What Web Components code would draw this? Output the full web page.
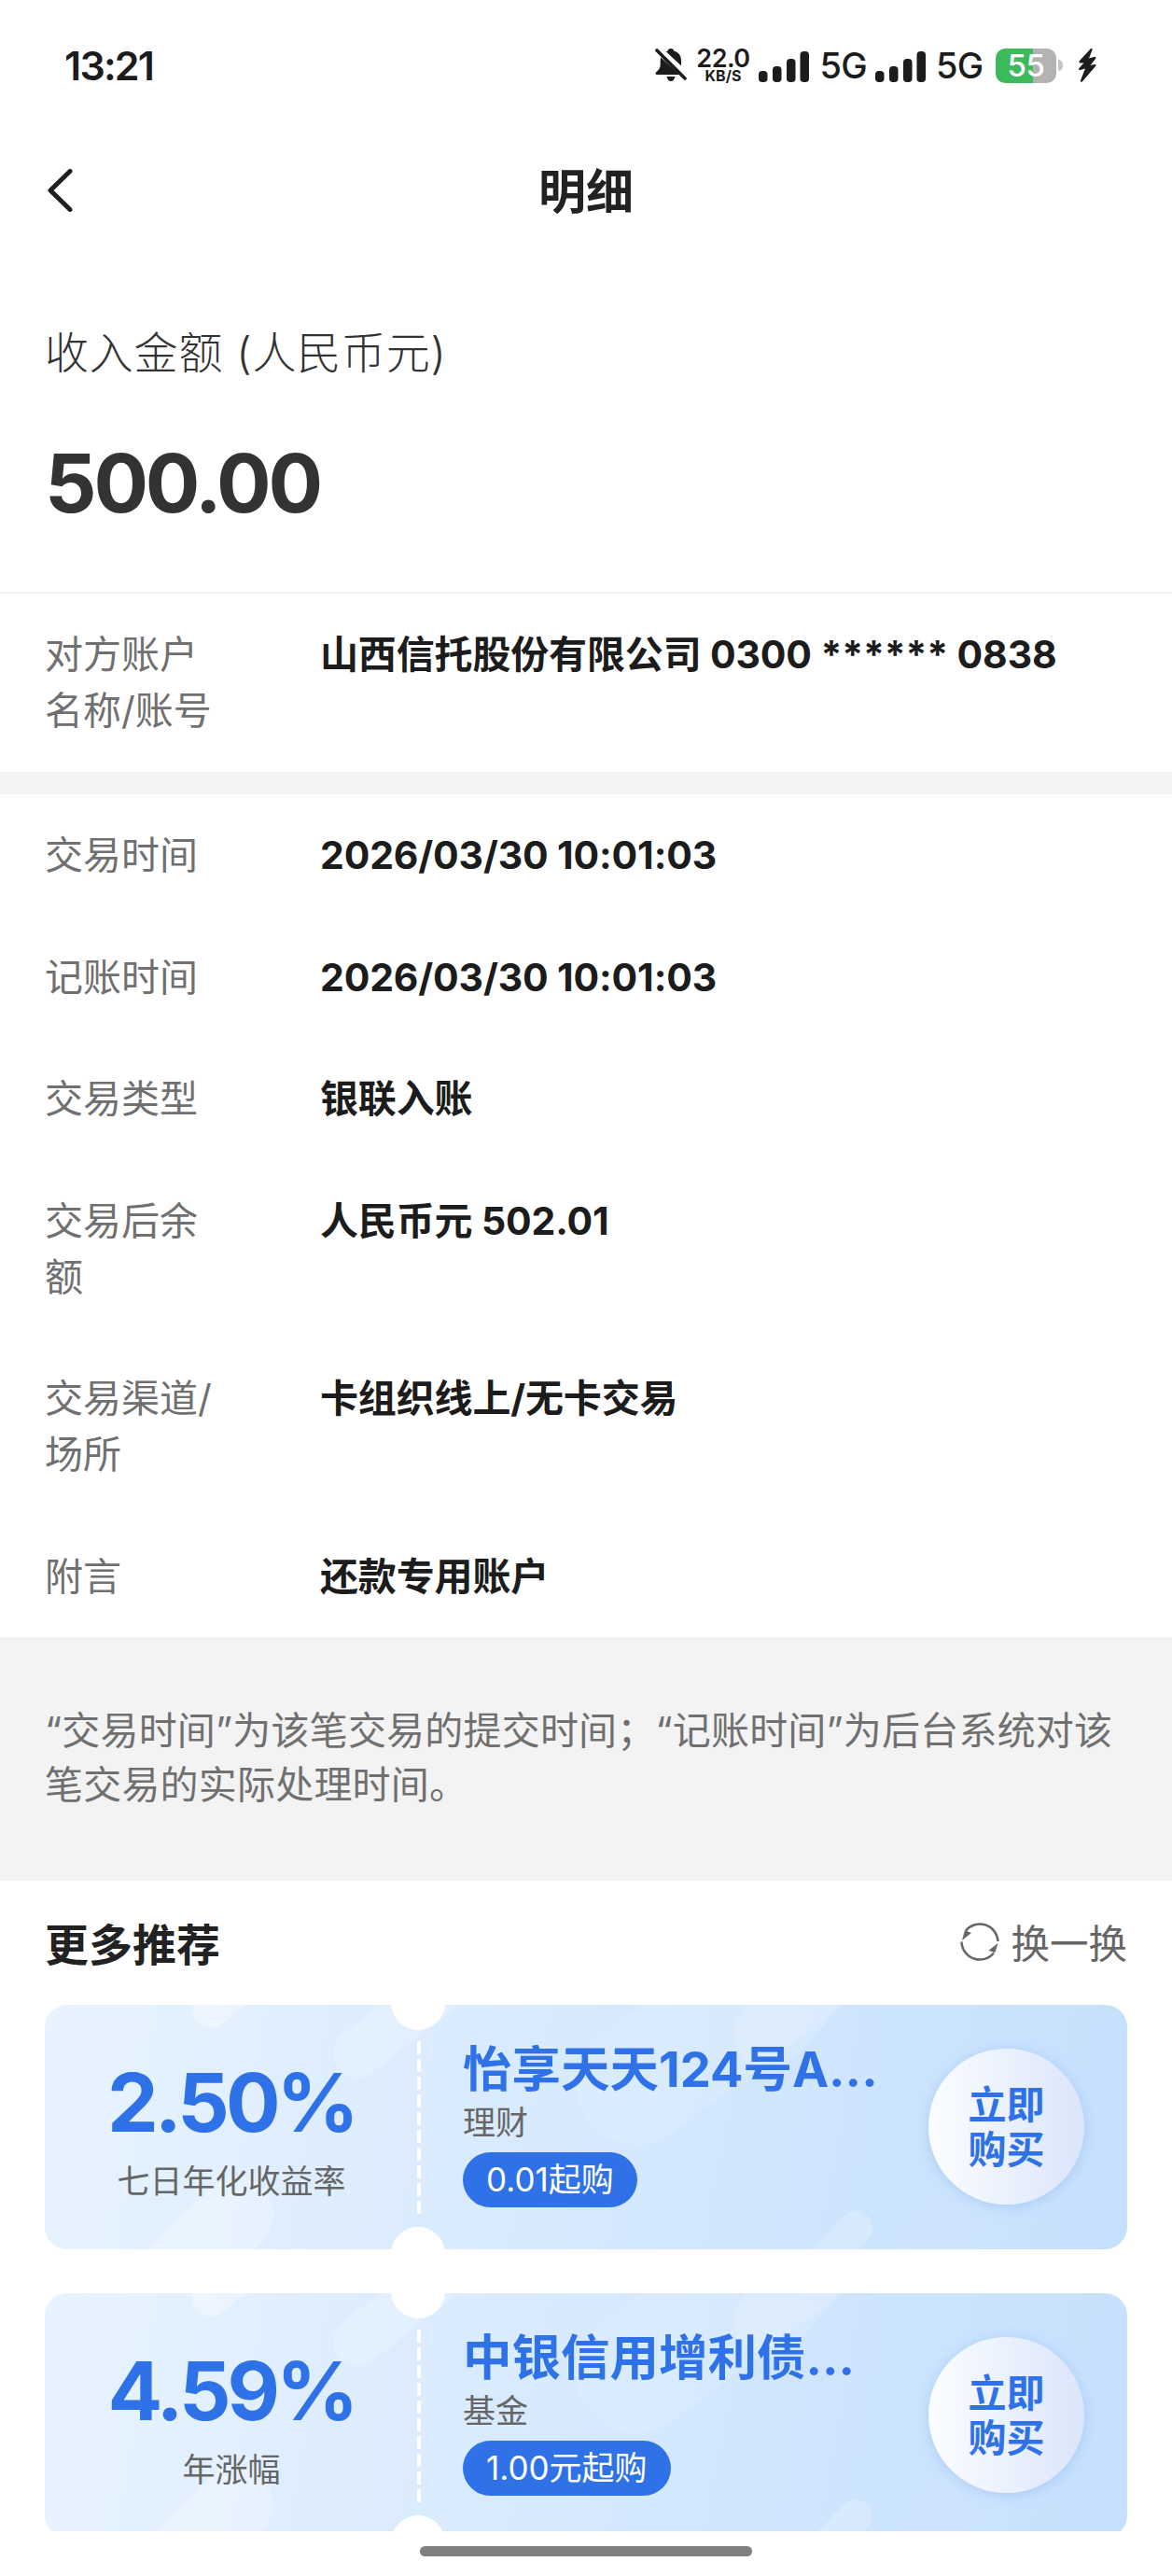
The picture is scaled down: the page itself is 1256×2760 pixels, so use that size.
<!DOCTYPE html>
<html lang="zh-CN">
<head>
<meta charset="utf-8">
<title>明细</title>
<style>
  html, body { margin: 0; padding: 0; background: #fff; }
  body { font-family: Inter, "Noto Sans CJK SC", sans-serif; }
</style>
</head>
<body>
<detail-page>
  <status-bar></status-bar>
  <nav-header title="明细"></nav-header>
  <amount-head label="收入金额 (人民币元)" amount="500.00"></amount-head>
  <detail-row label="对方账户名称/账号" value="山西信托股份有限公司 0300 ****** 0838"></detail-row>
  <grey-gap></grey-gap>
  <detail-row label="交易时间" value="2026/03/30 10:01:03"></detail-row>
  <detail-row label="记账时间" value="2026/03/30 10:01:03"></detail-row>
  <detail-row label="交易类型" value="银联入账"></detail-row>
  <detail-row label="交易后余额" value="人民币元 502.01"></detail-row>
  <detail-row label="交易渠道/场所" value="卡组织线上/无卡交易"></detail-row>
  <detail-row label="附言" value="还款专用账户"></detail-row>
  <info-note>“交易时间”为该笔交易的提交时间；“记账时间”为后台系统对该笔交易的实际处理时间。</info-note>
  <more-head></more-head>
  <product-card rate="2.50%" rate-label="七日年化收益率" name="怡享天天124号A..." kind="理财" start="0.01起购"></product-card>
  <product-card rate="4.59%" rate-label="年涨幅" name="中银信用增利债..." kind="基金" start="1.00元起购"></product-card>
  <home-bar slot="overlay"></home-bar>
</detail-page>

<script>
const FONT = 'Inter, "Noto Sans CJK SC", sans-serif';

// small helper, every element here is only a shadow root with static markup
class Base extends HTMLElement {
  render(html) {
    if (!this.shadowRoot) this.attachShadow({ mode: 'open' });
    this.shadowRoot.innerHTML = html;
  }
}

class DetailPage extends Base {
  connectedCallback() {
    this.render(`
      <style>
        :host { display: block; position: relative; width: 1256px; height: 2760px; overflow: hidden; background: #fff; font-family: ${FONT}; }
      </style>
      <slot></slot>
      <slot name="overlay"></slot>`);
  }
}

class StatusBar extends Base {
  signal() {
    return `<svg width="54" height="33" viewBox="0 0 54 33" fill="#1c1c1c">
      <rect x="0" y="21" width="9.500" height="12" rx="4"/>
      <rect x="15" y="16" width="9.500" height="17" rx="4"/>
      <rect x="30" y="8" width="9.500" height="25" rx="4"/>
      <rect x="44.500" y="0" width="9.500" height="33" rx="4"/>
    </svg>`;
  }
  connectedCallback() {
    this.render(`
      <style>
        :host { display: flex; align-items: center; height: 140px; padding: 0 81px 0 69px; box-sizing: border-box; color: #1c1c1c; }
        .time { font-size: 43px; font-weight: 600; letter-spacing: -1.8px; flex: 1; line-height: 1; margin-top: 1px; }
        .icons { display: flex; align-items: center; height: 40px; }
        .speed { display: flex; flex-direction: column; align-items: center; width: 56px; margin: 0 9.5px 0 11px; font-weight: 600; }
        .speed b { font-size: 27px; line-height: 22px; font-weight: 600; letter-spacing: -.5px; }
        .speed i { font-size: 16px; line-height: 15px; font-style: normal; font-weight: 700; }
        .g { width: 47px; font-size: 38px; font-weight: 500; letter-spacing: -.8px; line-height: 1; white-space: nowrap; }
        .g.a { margin: 0 12.5px 0 12px; }
        .g.b { margin: 0 11px 0 11px; }
        .sig { margin-top: 6px; }
        .batt { position: relative; width: 65px; height: 37px; border-radius: 10px; margin-left: 6px; background: linear-gradient(90deg, #3dbb5c 0 40px, #b3b3b3 40px); color: #fff; text-align: center; font-size: 33px; font-weight: 500; line-height: 37px; letter-spacing: -.5px; }
        .nub { width: 5px; height: 12px; margin-left: 2px; background: #c4c4c4; border-radius: 0 6px 6px 0; }
        .bolt { margin-left: 16px; }
      </style>
      <div class="time">13:21</div>
      <div class="icons">
        <svg width="34" height="38" viewBox="0 0 34 38" fill="#1c1c1c">
          <path d="M17 1c2 0 3 1 3.400 2.800 4.800 1.200 7.600 5 7.600 10.200v5.500L10 4.800c.9-.5 2-.9 3.400-1.100C13.900 2 15 1 17 1z"/>
          <path d="M6.200 10.500 26.500 29H2c-1.500 0-2-1.700-.8-2.700 2.800-2.300 4.500-4.300 4.500-8.300v-4c0-1.300.2-2.400.5-3.500z"/>
          <path d="M12.500 31h9c-.6 3-2.300 5-4.500 5s-3.900-2-4.500-5z"/>
          <path d="M2 3l30 30" stroke="#1c1c1c" stroke-width="3.600" stroke-linecap="round"/>
          <path d="M5.500 0 34 27" stroke="#fff" stroke-width="2.500"/>
        </svg>
        <div class="speed"><b>22.0</b><i>KB/S</i></div>
        <span class="sig">${this.signal()}</span>
        <span class="g a">5G</span>
        <span class="sig">${this.signal()}</span>
        <span class="g b">5G</span>
        <div class="batt">55</div>
        <div class="nub"></div>
        <svg class="bolt" width="20" height="36" viewBox="0 0 20 36" fill="#1c1c1c">
          <path d="M14 0 2 13c-1 1.200-.5 2.500 1 2.500h3.500L1.500 21c-1 1.300-.3 2.500 1.200 2L8 21.500 3 34c-.4 1.500 1 2.500 2 1.300L19 19c1-1.200.5-2.300-1-2l-4.500 1 5.500-7c1-1.300.3-2.400-1.200-2L12 10.500 15.500 1.500C16-.2 15-.8 14 0z"/>
        </svg>
      </div>`);
  }
}

class NavHeader extends Base {
  connectedCallback() {
    this.render(`
      <style>
        :host { display: flex; align-items: center; justify-content: center; position: relative; height: 130px; }
        svg { position: absolute; left: 50px; top: 41px; }
        h1 { margin: 0; font-size: 51px; font-weight: 700; color: #222; line-height: 1; }
      </style>
      <svg width="28" height="46" viewBox="0 0 28 46" fill="none" stroke="#1f1f1f" stroke-width="5" stroke-linecap="round" stroke-linejoin="round">
        <path d="M25 2.500 4 23l21 20.500"/>
      </svg>
      <h1>${this.getAttribute('title')}</h1>`);
    this.removeAttribute('title');
  }
}

class AmountHead extends Base {
  connectedCallback() {
    this.render(`
      <style>
        :host { display: block; padding: 79px 48px 66px; border-bottom: 2px solid #f2f2f2; color: #333; }
        .label { font-size: 47px; line-height: 58px; font-weight: 300; letter-spacing: .8px; }
        .amount { font-size: 87px; line-height: 100px; margin-top: 61px; font-weight: 700; letter-spacing: -3.2px; }
      </style>
      <div class="label">${this.getAttribute('label')}</div>
      <div class="amount">${this.getAttribute('amount')}</div>`);
  }
}

class DetailRow extends Base {
  connectedCallback() {
    this.render(`
      <style>
        :host { display: grid; grid-template-columns: 190px 1fr; column-gap: 105px; padding: 35px 48px 35.5px; font-size: 41px; line-height: 60px; }
        .label { color: #707070; font-weight: 400; }
        .value { color: #1c1c1c; font-weight: 700; letter-spacing: -.15px; }
      </style>
      <div class="label">${this.getAttribute('label')}</div>
      <div class="value">${this.getAttribute('value')}</div>`);
  }
}

class GreyGap extends Base {
  connectedCallback() {
    this.render(`<style>:host { display: block; height: 24.5px; background: #f3f3f3; }</style>`);
  }
}

class InfoNote extends Base {
  connectedCallback() {
    this.render(`
      <style>
        :host { display: block; background: #f3f3f3; padding: 71px 48px 74px; font-size: 41px; line-height: 58px; color: #707070; font-weight: 400; letter-spacing: .2px; }
      </style>
      <slot></slot>`);
  }
}

class MoreHead extends Base {
  connectedCallback() {
    this.render(`
      <style>
        :host { display: flex; align-items: center; justify-content: space-between; height: 66px; padding: 32px 48px 35px; }
        h2 { margin: 0; font-size: 47px; font-weight: 700; color: #222; }
        .swap { display: flex; align-items: center; gap: 12px; font-size: 41.5px; color: #666; font-weight: 400; }
      </style>
      <h2>更多推荐</h2>
      <div class="swap">
        <svg width="42" height="41" viewBox="0 0 42 41" fill="none" stroke="#666" stroke-width="2.500">
          <path d="M6 8.500A19.500 19.500 0 0 1 40.500 20"/>
          <path d="M36 32.500A19.500 19.500 0 0 1 1.500 20.500"/>
          <path d="M2 19 12 11 5 8z" fill="#666" stroke="none"/>
          <path d="M40.500 22 30.500 29.700 37.300 32.300z" fill="#666" stroke="none"/>
        </svg>
        <span>换一换</span>
      </div>`);
  }
}

class ProductCard extends Base {
  connectedCallback() {
    this.render(`
      <style>
        :host { display: block; position: relative; height: 262px; margin: 0 48px 47px; border-radius: 24px; overflow: hidden; background: linear-gradient(100deg, #e8f3ff 0%, #d8eafe 45%, #c5e0fd 100%); }
        .deco { position: absolute; inset: 0; }
        .notch { position: absolute; left: 371px; width: 58px; height: 58px; border-radius: 50%; background: #fff; }
        .notch.top { top: -31px; }
        .notch.bottom { top: 238px; }
        .dash { position: absolute; left: 399px; top: 39px; width: 4px; height: 188px; background: repeating-linear-gradient(180deg, #fff 0 14px, transparent 14px 19px); }
        .row { position: relative; display: flex; height: 100%; }
        .left { width: 400px; display: flex; flex-direction: column; align-items: center; padding-top: 60px; box-sizing: border-box; }
        .rate { font-size: 87px; line-height: 90px; font-weight: 700; color: #2f72e8; letter-spacing: -4px; }
        .rate-label { font-size: 35px; line-height: 46px; color: #666; margin-top: 16px; font-weight: 400; }
        .right { flex: 1; padding: 37px 0 0 48px; min-width: 0; }
        .name { font-size: 52.500px; line-height: 64px; font-weight: 700; color: #2f72e8; white-space: nowrap; }
        .kind { font-size: 35px; line-height: 46px; color: #666; margin-top: 2px; font-weight: 400; }
        .pill { display: inline-block; margin-top: 9px; height: 59px; line-height: 59px; padding: 0 25px; border-radius: 30px; background: #2f72e8; color: #fff; font-size: 35px; font-weight: 400; }
        .buy { position: absolute; right: 46px; top: 47px; width: 167px; height: 167px; border-radius: 50%; background: linear-gradient(90deg, #fbfdff, #dbe5fb); box-shadow: 0 2px 14px rgba(110, 160, 235, .35); color: #2f72e8; font-size: 41px; font-weight: 700; line-height: 48px; display: flex; align-items: center; justify-content: center; text-align: center; }
      </style>
      <svg class="deco" width="1160" height="262" viewBox="0 0 1160 262" fill="none" stroke="#fff" stroke-linecap="round">
        <path d="M178 5 230-40" stroke-width="40" opacity=".35"/>
        <path d="M335 52 440-30" stroke-width="52" opacity=".18"/>
        <path d="M205 225 90 340" stroke-width="80" opacity=".25"/>
        <path d="M634 85 800-40" stroke-width="130" opacity=".13"/>
        <path d="M777 30 830-30" stroke-width="76" opacity=".15"/>
        <path d="M869 239 820 290" stroke-width="36" opacity=".2"/>
        <path d="M985 240 930 320" stroke-width="100" opacity=".06"/>
      </svg>
      <div class="notch top"></div>
      <div class="notch bottom"></div>
      <div class="dash"></div>
      <div class="row">
        <div class="left">
          <div class="rate">${this.getAttribute('rate')}</div>
          <div class="rate-label">${this.getAttribute('rate-label')}</div>
        </div>
        <div class="right">
          <div class="name">${this.getAttribute('name')}</div>
          <div class="kind">${this.getAttribute('kind')}</div>
          <div class="pill">${this.getAttribute('start')}</div>
        </div>
      </div>
      <div class="buy">立即<br>购买</div>`);
  }
}

class HomeBar extends Base {
  connectedCallback() {
    this.render(`
      <style>
        :host { display: block; position: absolute; left: 0; right: 0; bottom: 0; height: 48px; background: #fff; }
        div { position: absolute; left: 450px; top: 16px; width: 356px; height: 11px; border-radius: 6px; background: #808080; }
      </style>
      <div></div>`);
  }
}

customElements.define('detail-page', DetailPage);
customElements.define('status-bar', StatusBar);
customElements.define('nav-header', NavHeader);
customElements.define('amount-head', AmountHead);
customElements.define('detail-row', DetailRow);
customElements.define('grey-gap', GreyGap);
customElements.define('info-note', InfoNote);
customElements.define('more-head', MoreHead);
customElements.define('product-card', ProductCard);
customElements.define('home-bar', HomeBar);
</script>
</body>
</html>
